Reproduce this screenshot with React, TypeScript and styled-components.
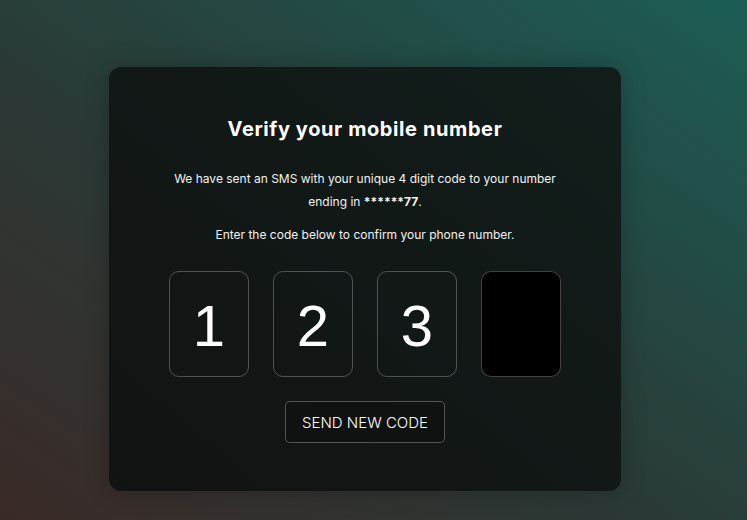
import React from "react";
import styled, { createGlobalStyle } from "styled-components";

const GlobalStyle = createGlobalStyle`
  html, body {
    margin: 0;
    padding: 0;
    height: 100%;
  }
  body {
    font-family: Inter, "Noto Sans", "Liberation Sans", sans-serif;
    color: #fff;
    background: linear-gradient(to top right, #3a2a27 0%, #2a3a37 45%, #1c5d55 100%);
    min-height: 520px;
  }
  #root {
    min-height: 520px;
  }
`;

const Page = styled.main`
  min-height: 520px;
  box-sizing: border-box;
  padding: 67px 17px 0 0;
  display: flex;
  justify-content: center;
  align-items: flex-start;
`;

const Card = styled.section`
  width: 512px;
  box-sizing: border-box;
  padding: 50px 60px 48px;
  border-radius: 12px;
  background: linear-gradient(to top right, #111312 0%, #111917 60%, #121e1b 100%);
  box-shadow: 0 0 24px rgba(0, 0, 0, 0.25);
  display: flex;
  flex-direction: column;
  align-items: center;
  text-align: center;
`;

const Title = styled.h1`
  margin: 0;
  font-size: 20px;
  line-height: 24px;
  font-weight: 700;
  letter-spacing: 0.03em;
  color: #fff;
`;

const Text = styled.p<{ $gap: number }>`
  margin: ${(p) => p.$gap}px 0 0;
  font-size: 12px;
  line-height: 23px;
  font-weight: 400;
  color: #f2f2f2;
  max-width: 392px;
  strong {
    font-weight: 700;
  }
`;

const CodeRow = styled.div`
  margin-top: 25px;
  display: flex;
  gap: 24px;
`;

const DigitBox = styled.div<{ $empty?: boolean }>`
  width: 80px;
  height: 106px;
  box-sizing: border-box;
  border: 1px solid rgba(255, 255, 255, 0.26);
  border-radius: 10px;
  background: ${(p) => (p.$empty ? "#000" : "transparent")};
  display: flex;
  align-items: center;
  justify-content: center;
  padding-top: 2px;
  font-family: "Liberation Sans", Arial, sans-serif;
  font-size: 58px;
  font-weight: 400;
  color: #fff;
`;

const ResendButton = styled.button`
  margin-top: 24px;
  width: 160px;
  height: 42px;
  border: 1px solid rgba(255, 255, 255, 0.28);
  border-radius: 5px;
  background: #0f1211;
  color: #fff;
  font-family: Inter, "Liberation Sans", sans-serif;
  font-size: 15px;
  font-weight: 300;
  text-transform: uppercase;
  cursor: pointer;
  padding: 0;
`;

const digits = ["1", "2", "3", ""];

export default function App() {
  return (
    <>
      <GlobalStyle />
      <Page>
        <Card>
          <Title>Verify your mobile number</Title>
          <Text $gap={26}>
            We have sent an SMS with your unique 4 digit code to your number ending in{" "}
            <strong>******77</strong>.
          </Text>
          <Text $gap={10}>Enter the code below to confirm your phone number.</Text>
          <CodeRow>
            {digits.map((d, i) => (
              <DigitBox key={i} $empty={d === ""}>
                {d}
              </DigitBox>
            ))}
          </CodeRow>
          <ResendButton>Send new code</ResendButton>
        </Card>
      </Page>
    </>
  );
}
